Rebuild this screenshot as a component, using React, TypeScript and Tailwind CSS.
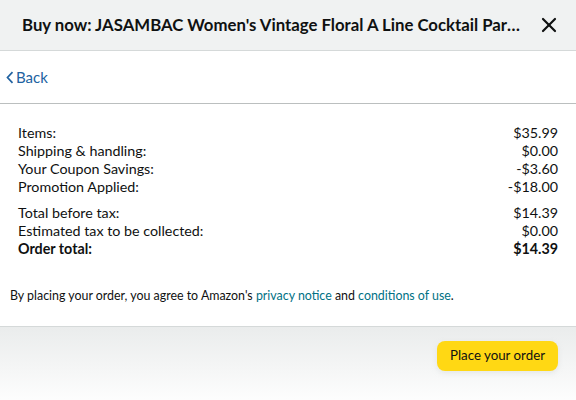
import { X } from 'lucide-react';

const rows1 = [
  ['Items:', '$35.99'],
  ['Shipping & handling:', '$0.00'],
  ['Your Coupon Savings:', '-$3.60'],
  ['Promotion Applied:', '-$18.00'],
];

const rows2 = [
  ['Total before tax:', '$14.39'],
  ['Estimated tax to be collected:', '$0.00'],
];

export default function App() {
  return (
    <div className="w-[576px] h-[400px] bg-white text-[#0f1111] overflow-hidden" style={{ fontFamily: 'Lato, Arial, sans-serif' }}>
      <div className="h-[51px] bg-[#f0f2f2] border-b border-[#d5d9d9] flex items-center pl-[22px] pr-[15px]">
        <h1 className="flex-1 truncate text-[16.75px] font-bold">
          Buy now: JASAMBAC Women's Vintage Floral A Line Cocktail Party Dress
        </h1>
        <X className="w-6 h-6 ml-[14px] text-[#0f1111]" strokeWidth={2.2} />
      </div>
      <div className="h-[53px] border-b border-[#bbbfbf] flex items-center pl-[6px]">
        <a className="flex items-center text-[15px] text-[#2162a1]">
          <svg width="8" height="13" viewBox="0 0 8 13" className="mr-[2px]">
            <path d="M6.5 1.2 1.5 6.5l5 5.3" stroke="currentColor" strokeWidth="1.7" fill="none" />
          </svg>
          Back
        </a>
      </div>
      <div className="px-[18px] pt-[20px] text-[14.3px] leading-[18px]">
        {rows1.map(([l, v]) => (
          <div key={l} className="flex justify-between">
            <span>{l}</span>
            <span>{v}</span>
          </div>
        ))}
        <div className="mt-2">
          {rows2.map(([l, v]) => (
            <div key={l} className="flex justify-between">
              <span>{l}</span>
              <span>{v}</span>
            </div>
          ))}
          <div className="flex justify-between font-bold">
            <span>Order total:</span>
            <span>$14.39</span>
          </div>
        </div>
      </div>
      <p className="pl-[10px] pt-[29px] pb-[20px] text-[12.4px] border-b border-[#d5d9d9]">
        By placing your order, you agree to Amazon's{' '}
        <a className="text-[#007185]">privacy notice</a> and{' '}
        <a className="text-[#007185]">conditions of use</a>.
      </p>
      <div className="h-[80px] bg-gradient-to-b from-[#eaecec] to-white flex justify-end pt-[14px] pr-[18px]">
        <button className="h-[30px] px-[13px] rounded-[8px] bg-[#ffd814] text-[13.3px] shadow-[0_2px_5px_rgba(213,217,217,0.5)]">
          Place your order
        </button>
      </div>
    </div>
  );
}
